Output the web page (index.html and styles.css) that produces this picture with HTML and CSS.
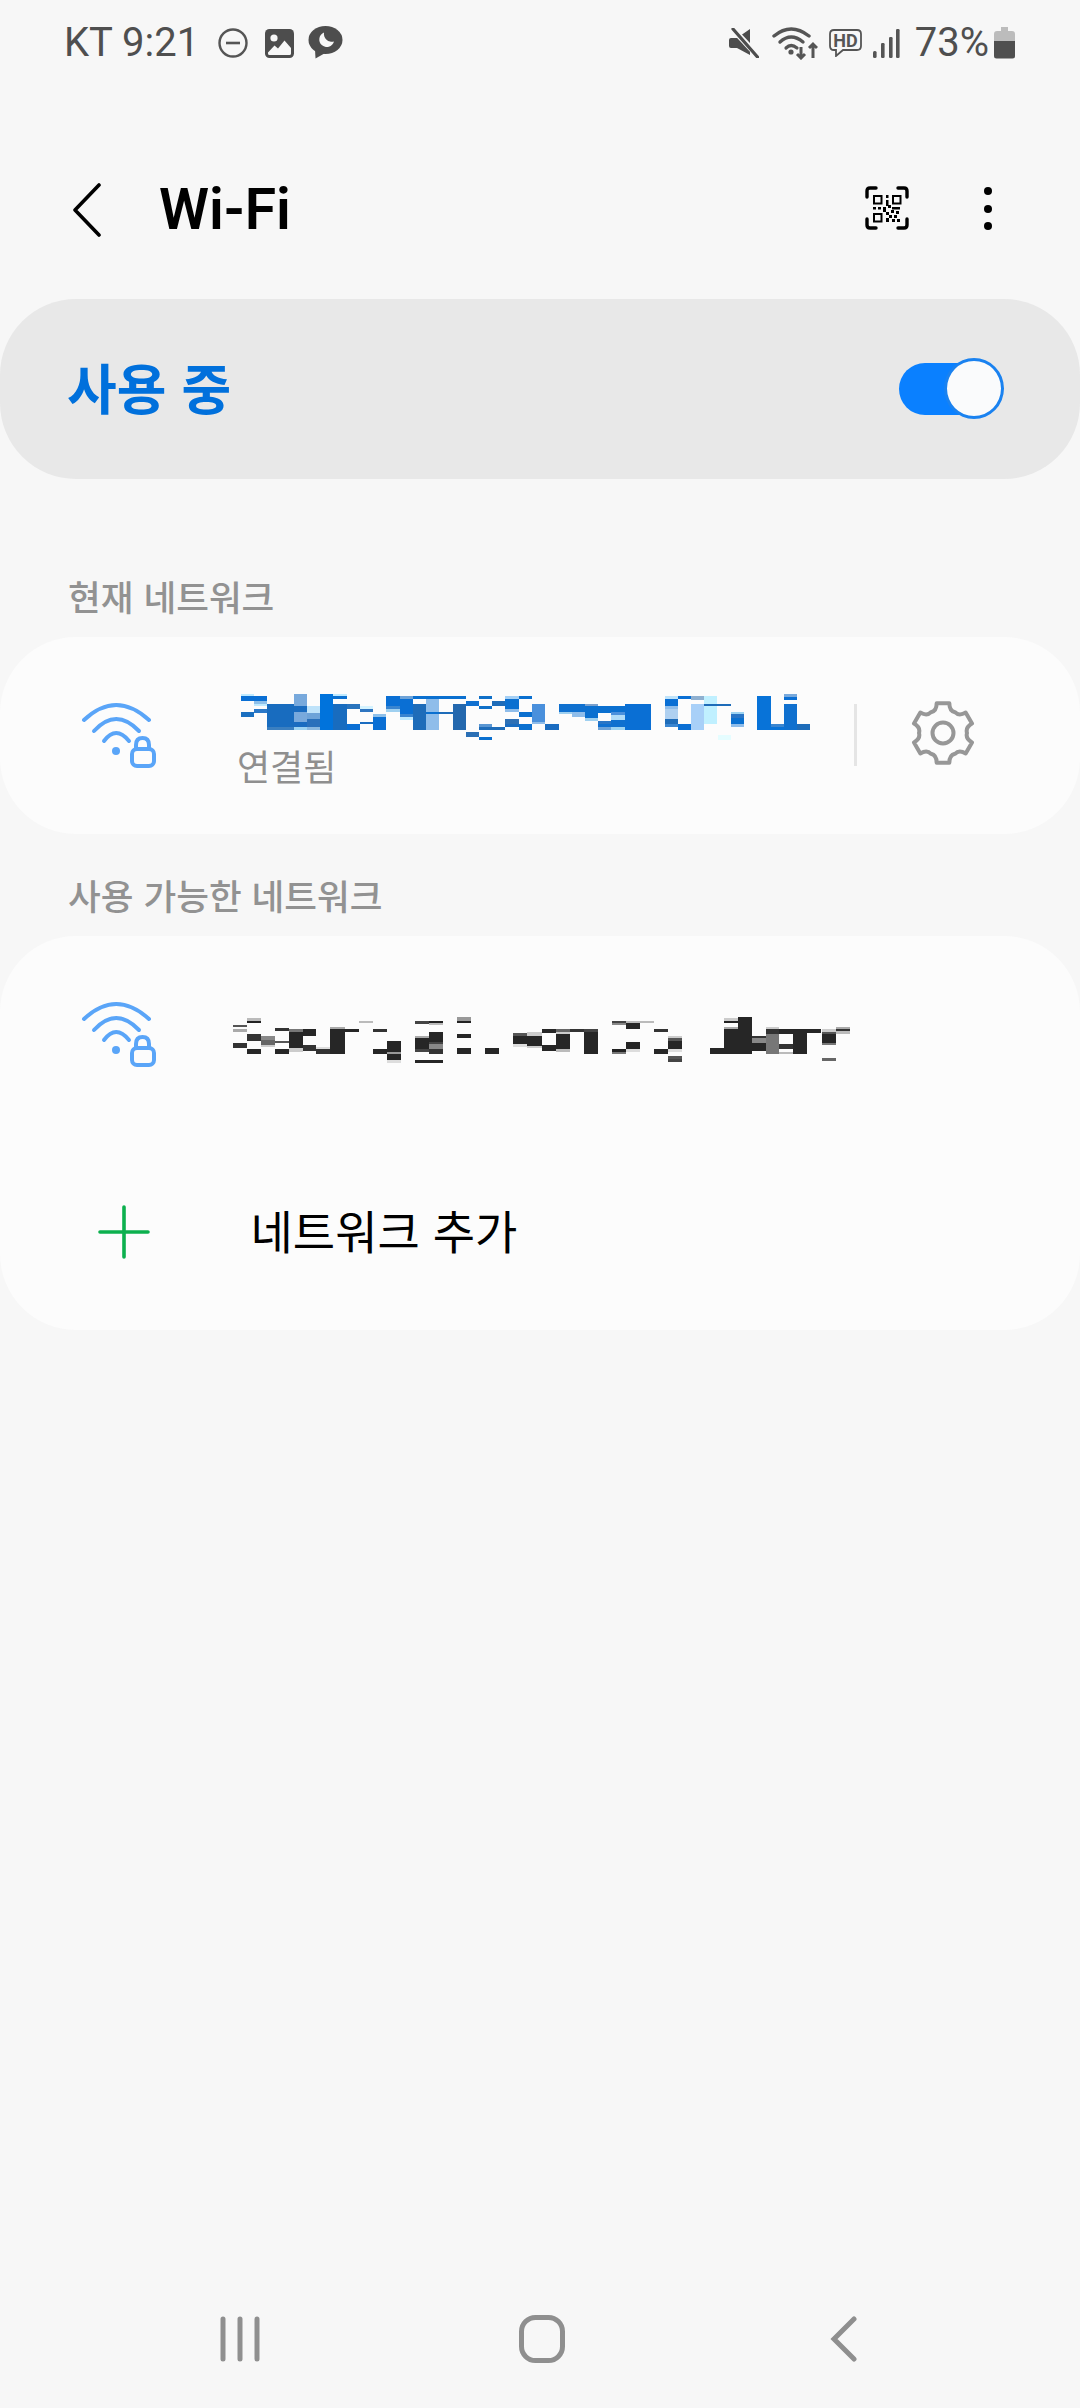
FILE: index.html
```html
<!DOCTYPE html>
<html lang="ko">
<head>
<meta charset="utf-8">
<title>Wi-Fi</title>
<link rel="stylesheet" href="styles.css">
</head>
<body>
<div class="page">
  <div class="status">
    <div class="status-left">
      <span class="status-text">KT 9:21</span>
      <svg class="ic-dnd" width="30" height="30" viewBox="0 0 30 30"><circle cx="15" cy="15" r="13.5" fill="none" stroke="#555" stroke-width="2.4"/><path d="M8 15H22" stroke="#555" stroke-width="2.6"/></svg>
      <svg class="ic-img" width="29" height="29" viewBox="0 0 29 29"><rect width="29" height="29" rx="4.5" fill="#4d4d4d"/><circle cx="9" cy="9" r="3.6" fill="#f7f7f7"/><path d="M3 23.5 9.5 16.5 13 19.5 19.5 11.5 26 19V24.5Q26 26 24.5 26H4.500Q3 26 3 24.500Z" fill="#f7f7f7"/></svg>
      <svg class="ic-chat" width="35" height="33" viewBox="0 0 35 33"><ellipse cx="17.500" cy="14" rx="17" ry="14" fill="#4d4d4d"/><path d="M7 23 7.500 32.500 19 26Z" fill="#4d4d4d"/><path d="M16 6.500A7.500 7.500 0 1 0 26 15.500 8 8 0 0 1 16 6.500Z" fill="#f7f7f7"/></svg>
    </div>
    <div class="status-right">
      <svg class="ic-mute" width="30" height="30" viewBox="0 0 30 30"><path d="M0 12Q0 10 2 10H8L21 1V27L8 20H2Q0 20 0 18Z" fill="#4d4d4d"/><path d="M2 -1 29 28" stroke="#f7f7f7" stroke-width="6"/><path d="M4 1 28.500 29" stroke="#4d4d4d" stroke-width="3.200" stroke-linecap="round"/></svg>
      <svg class="ic-wifi" width="46" height="34" viewBox="0 0 46 34"><g fill="none" stroke="#555" stroke-linecap="round"><path d="M2 10Q19-4 37 10" stroke-width="3.400"/><path d="M8 16Q19 6 31 16" stroke-width="3.400"/><path d="M14 22Q19 17 25 22" stroke-width="3.200"/></g><circle cx="19" cy="26" r="2.600" fill="#555"/><path d="M29 21V32M25 28 29 32 33 28M41 32V18M37 22 41 18 45 22" fill="none" stroke="#555" stroke-width="3"/></svg>
      <svg class="ic-hd" width="33" height="28" viewBox="0 0 33 28"><path d="M5 1H28Q32 1 32 5V17Q32 21 28 21H14L7 27V21H5Q1 21 1 17V5Q1 1 5 1Z" fill="none" stroke="#555" stroke-width="1.800"/><text class="hd-text" x="16.500" y="17.500" text-anchor="middle">HD</text></svg>
      <svg class="ic-sig" width="28" height="30" viewBox="0 0 28 30"><g fill="#555"><rect x="1" y="23" width="3.600" height="7" rx="1.500"/><rect x="9" y="15" width="3.600" height="15" rx="1.200"/><rect x="17" y="9" width="3.600" height="21" rx="1.200"/><rect x="24" y="1" width="3.600" height="29" rx="1.200"/></g></svg>
      <span class="status-text pct">73%</span>
      <svg class="ic-bat" width="21" height="32" viewBox="0 0 21 32"><path d="M7 0H14V4H18Q21 4 21 7V14H0V7Q0 4 3 4H7Z" fill="#bcbcbc"/><path d="M0 14H21V29Q21 31.500 18.500 31.500H2.500Q0 31.500 0 29Z" fill="#4f4f4f"/></svg>
    </div>
  </div>

  <header class="header">
    <svg class="back" width="30" height="54" viewBox="0 0 30 54"><path d="M26 2 2 27 26 52" fill="none" stroke="#000" stroke-width="3.600" stroke-linecap="round" stroke-linejoin="round"/></svg>
    <h1 class="title">Wi-Fi</h1>
    <svg class="qr" width="44" height="44" viewBox="0 0 44 44">
      <path d="M2 11V5Q2 2 5 2H11M33 2H39Q42 2 42 5V11M2 33V39Q2 42 5 42H11M33 42H39Q42 42 42 39V33" fill="none" stroke="#000" stroke-width="3.400" stroke-linecap="round"/>
      <g fill="none" stroke="#000" stroke-width="2"><rect x="9" y="10" width="7.500" height="7.500"/><rect x="28" y="10" width="7.500" height="7.500"/><rect x="9" y="28" width="7.500" height="7.500"/></g>
      <g fill="#000"><rect x="21" y="9" width="2.500" height="3"/><rect x="21" y="14" width="2.500" height="6"/><rect x="8" y="21" width="3" height="2.500"/><rect x="13" y="21" width="3" height="2.500"/><rect x="18" y="21" width="3" height="5"/><rect x="23" y="19" width="3" height="3"/><rect x="27" y="21" width="8" height="2.500"/><rect x="21" y="26" width="3" height="3"/><rect x="26" y="24" width="3" height="3"/><rect x="31" y="25" width="3" height="3"/><rect x="24" y="29" width="3" height="3"/><rect x="29" y="29" width="3" height="3"/><rect x="21" y="32" width="3" height="4"/><rect x="27" y="33" width="3" height="3"/><rect x="32" y="33" width="3" height="3"/></g>
    </svg>
    <div class="dots"><i></i><i></i><i></i></div>
  </header>

  <section class="master">
    <span class="master-label">사용 중</span>
    <span class="toggle"><span class="knob"></span></span>
  </section>

  <div class="section-label first">현재 네트워크</div>
  <section class="card">
    <div class="row">
      <svg class="wifi-lock" width="76" height="66" viewBox="81 702 76 66"><g fill="none" stroke="#5aa5f8" stroke-width="4" stroke-linecap="round"><path d="M84 720Q116 690 149 720"/><path d="M94 731Q116 707 139 731"/><path d="M104 741Q116 725 129 741"/><rect x="132" y="749" width="22" height="17" rx="5"/><path d="M136 749V745Q136 738 142.500 738 149 738 149 745V749"/></g><circle cx="116" cy="751" r="4" fill="#5aa5f8"/></svg>
      <div class="row-text">
        <svg class="mosaic" width="620" height="50" viewBox="0 60 1568 150" preserveAspectRatio="none" shape-rendering="crispEdges">
          <rect x="52" y="75" width="67" height="15" fill="#0a6fd4"/><rect x="52" y="70" width="33" height="5" fill="#bfeaff"/><rect x="85" y="90" width="33" height="8" fill="#8ec0ea"/><rect x="85" y="98" width="33" height="8" fill="#bfeaff"/><rect x="85" y="115" width="33" height="12" fill="#2a78c8"/><rect x="52" y="122" width="33" height="15" fill="#1a6fc0"/>
          <rect x="119" y="98" width="68" height="72" fill="#186cbf"/><rect x="119" y="168" width="68" height="9" fill="#3a7fc0"/>
          <rect x="187" y="69" width="33" height="35" fill="#78a9dc"/><rect x="187" y="104" width="33" height="18" fill="#1a6cc0"/><rect x="187" y="122" width="33" height="30" fill="#78a9dc"/><rect x="187" y="152" width="33" height="16" fill="#1a6cc0"/><rect x="187" y="168" width="33" height="9" fill="#9dd3f2"/>
          <rect x="220" y="104" width="33" height="21" fill="#bfe3fa"/><rect x="220" y="125" width="33" height="18" fill="#6ea3d8"/><rect x="220" y="143" width="33" height="25" fill="#2a70bb"/><rect x="220" y="168" width="33" height="9" fill="#8ab8e0"/>
          <rect x="253" y="69" width="33" height="108" fill="#0073dc"/>
          <rect x="286" y="98" width="34" height="79" fill="#186cbf"/><rect x="286" y="75" width="35" height="9" fill="#0b70d0"/><rect x="286" y="69" width="35" height="6" fill="#bfeaff"/>
          <rect x="320" y="98" width="35" height="15" fill="#2a74bd"/><rect x="320" y="160" width="35" height="17" fill="#0a6fd4"/><rect x="355" y="115" width="33" height="9" fill="#2f75c0"/><rect x="355" y="152" width="33" height="8" fill="#1a6cc0"/><rect x="355" y="105" width="33" height="10" fill="#d5f3ff"/><rect x="388" y="138" width="32" height="39" fill="#0a6fd4"/><rect x="388" y="128" width="32" height="10" fill="#8ec0ea"/>
          <rect x="420" y="75" width="35" height="30" fill="#0a6fd4"/><rect x="420" y="105" width="35" height="10" fill="#3a85d0"/><rect x="420" y="115" width="35" height="8" fill="#9fd0f0"/>
          <rect x="455" y="75" width="33" height="12" fill="#6ea3d8"/><rect x="455" y="85" width="33" height="45" fill="#0a6fd4"/><rect x="455" y="130" width="33" height="8" fill="#3a85d0"/><rect x="455" y="138" width="33" height="8" fill="#bfeaff"/>
          <rect x="488" y="75" width="135" height="9" fill="#0b70d0"/><rect x="488" y="98" width="33" height="79" fill="#1e6cb9"/><rect x="521" y="84" width="33" height="40" fill="#8fbdea"/><rect x="521" y="124" width="33" height="6" fill="#0b70d0"/><rect x="521" y="130" width="33" height="47" fill="#8fbdea"/><rect x="555" y="124" width="34" height="6" fill="#1e6cb9"/><rect x="589" y="98" width="33" height="79" fill="#2468ae"/>
          <rect x="622" y="90" width="33" height="15" fill="#1070d0"/><rect x="655" y="75" width="33" height="9" fill="#1070c8"/><rect x="655" y="105" width="33" height="9" fill="#1070c8"/><rect x="688" y="90" width="34" height="15" fill="#1e6cb9"/><rect x="722" y="84" width="33" height="30" fill="#0b70d0"/><rect x="722" y="75" width="33" height="10" fill="#a5d0f5"/><rect x="722" y="114" width="33" height="8" fill="#8fbdea"/><rect x="755" y="75" width="33" height="9" fill="#0b70d0"/><rect x="755" y="122" width="33" height="15" fill="#0b70d0"/><rect x="722" y="145" width="33" height="15" fill="#2e70b5"/><rect x="655" y="168" width="67" height="9" fill="#1e6cb9"/><rect x="655" y="160" width="33" height="8" fill="#5a96d2"/><rect x="722" y="160" width="33" height="9" fill="#1a6cc0"/><rect x="755" y="160" width="33" height="17" fill="#0b70d0"/><rect x="622" y="182" width="33" height="15" fill="#2a6fb5"/><rect x="655" y="198" width="33" height="9" fill="#0b70d0"/>
          <rect x="788" y="98" width="33" height="55" fill="#4a90dc"/><rect x="788" y="153" width="33" height="7" fill="#8fbdea"/><rect x="822" y="160" width="35" height="17" fill="#1a6cc0"/>
          <rect x="857" y="98" width="66" height="25" fill="#0f70cf"/><rect x="923" y="98" width="33" height="8" fill="#7aa0cc"/><rect x="857" y="123" width="33" height="6" fill="#9fd0f0"/><rect x="890" y="123" width="33" height="15" fill="#8fbdea"/><rect x="923" y="106" width="33" height="35" fill="#0b70d0"/><rect x="923" y="141" width="33" height="10" fill="#9fd0f0"/>
          <rect x="956" y="105" width="33" height="20" fill="#0b70d0"/><rect x="956" y="150" width="33" height="10" fill="#2a75c5"/><rect x="956" y="160" width="33" height="8" fill="#1070d0"/><rect x="956" y="168" width="33" height="9" fill="#6ea3d8"/><rect x="989" y="105" width="35" height="18" fill="#0b70d0"/><rect x="989" y="123" width="35" height="8" fill="#4a90dc"/><rect x="989" y="131" width="35" height="15" fill="#b0dcf8"/><rect x="989" y="146" width="35" height="22" fill="#0f70cf"/><rect x="989" y="168" width="35" height="9" fill="#9dd3f2"/><rect x="1024" y="98" width="66" height="79" fill="#0a6fd4"/>
          <rect x="1125" y="75" width="33" height="8" fill="#bfe3fa"/><rect x="1125" y="83" width="33" height="22" fill="#0a6fd4"/><rect x="1125" y="105" width="33" height="8" fill="#8fbdea"/><rect x="1125" y="113" width="33" height="30" fill="#afd0f0"/><rect x="1125" y="143" width="33" height="17" fill="#1e6cb9"/><rect x="1125" y="160" width="33" height="8" fill="#3a85d0"/><rect x="1158" y="75" width="33" height="8" fill="#0a6fd4"/><rect x="1158" y="160" width="33" height="17" fill="#0a6fd4"/><rect x="1191" y="75" width="33" height="12" fill="#8fb0d0"/><rect x="1191" y="98" width="33" height="79" fill="#a8d0f8"/><rect x="1224" y="75" width="33" height="23" fill="#c0f0ff"/><rect x="1224" y="98" width="68" height="6" fill="#1e6cb9"/><rect x="1224" y="104" width="33" height="55" fill="#c0f0ff"/><rect x="1292" y="122" width="33" height="8" fill="#9dd3f2"/><rect x="1292" y="130" width="33" height="10" fill="#2a75c5"/><rect x="1292" y="140" width="33" height="20" fill="#0a70d0"/><rect x="1292" y="160" width="33" height="8" fill="#8fbdea"/><rect x="1259" y="192" width="33" height="14" fill="#e5fdff"/>
          <rect x="1358" y="75" width="35" height="102" fill="#0873d8"/><rect x="1393" y="158" width="33" height="10" fill="#3a85d0"/><rect x="1393" y="168" width="33" height="9" fill="#0873d8"/><rect x="1426" y="70" width="33" height="8" fill="#78a9dc"/><rect x="1426" y="78" width="33" height="8" fill="#0a6fd4"/><rect x="1426" y="98" width="33" height="79" fill="#0f70cf"/><rect x="1459" y="158" width="33" height="19" fill="#1e6cb9"/>
        </svg>
        <span class="sub">연결됨</span>
      </div>
      <span class="divider"></span>
      <svg class="gear" width="64" height="66" viewBox="0 0 64 66"><path d="M25.660 3.170H38.340Q38.340 10.900 44 12.220 47.980 16.460 54.670 12.590L61 23.570Q54.320 27.440 56 33 54.320 38.560 61 42.430L54.670 53.410Q47.980 49.540 44 53.780 38.340 55.100 38.340 62.830H25.660Q25.660 55.100 20 53.780 16.020 49.540 9.330 53.410L3 42.430Q9.680 38.560 8 33 9.680 27.440 3 23.570L9.330 12.590Q16.020 16.460 20 12.220 25.660 10.900 25.660 3.170Z" fill="none" stroke="#979797" stroke-width="4" stroke-linejoin="round"/><circle cx="32" cy="33" r="10.500" fill="none" stroke="#979797" stroke-width="4"/></svg>
    </div>
  </section>

  <div class="section-label second">사용 가능한 네트워크</div>
  <section class="card">
    <div class="row">
      <svg class="wifi-lock" width="76" height="66" viewBox="81 702 76 66"><g fill="none" stroke="#5aa5f8" stroke-width="4" stroke-linecap="round"><path d="M84 720Q116 690 149 720"/><path d="M94 731Q116 707 139 731"/><path d="M104 741Q116 725 129 741"/><rect x="132" y="749" width="22" height="17" rx="5"/><path d="M136 749V745Q136 738 142.500 738 149 738 149 745V749"/></g><circle cx="116" cy="751" r="4" fill="#5aa5f8"/></svg>
      <div class="row-text">
        <svg class="mosaic" width="660" height="50" viewBox="0 40 1568 150" preserveAspectRatio="none" shape-rendering="crispEdges">
          <rect x="31" y="72" width="33" height="8" fill="#555"/><rect x="31" y="85" width="33" height="8" fill="#aaa"/><rect x="64" y="52" width="33" height="8" fill="#bbb"/><rect x="64" y="60" width="33" height="6" fill="#222"/><rect x="64" y="100" width="33" height="20" fill="#333"/><rect x="31" y="128" width="33" height="15" fill="#333"/><rect x="64" y="145" width="33" height="14" fill="#262626"/><rect x="97" y="105" width="33" height="12" fill="#888"/><rect x="97" y="117" width="33" height="15" fill="#666"/><rect x="97" y="132" width="33" height="6" fill="#ccc"/><rect x="130" y="82" width="33" height="10" fill="#333"/><rect x="130" y="120" width="33" height="6" fill="#555"/><rect x="130" y="145" width="33" height="14" fill="#262626"/><rect x="163" y="85" width="33" height="8" fill="#777"/><rect x="163" y="93" width="33" height="50" fill="#262626"/><rect x="163" y="143" width="33" height="10" fill="#ccc"/><rect x="196" y="85" width="33" height="20" fill="#262626"/><rect x="196" y="132" width="33" height="20" fill="#333"/><rect x="229" y="140" width="33" height="6" fill="#ddd"/><rect x="229" y="146" width="33" height="13" fill="#333"/><rect x="262" y="85" width="35" height="74" fill="#262626"/><rect x="262" y="78" width="35" height="7" fill="#aaa"/><rect x="297" y="85" width="33" height="10" fill="#262626"/><rect x="330" y="60" width="33" height="6" fill="#bbb"/><rect x="363" y="85" width="33" height="8" fill="#333"/><rect x="363" y="145" width="33" height="14" fill="#262626"/><rect x="397" y="120" width="33" height="35" fill="#262626"/><rect x="397" y="155" width="33" height="5" fill="#999"/><rect x="397" y="160" width="33" height="18" fill="#262626"/><rect x="397" y="178" width="33" height="8" fill="#ddd"/>
          <rect x="463" y="60" width="33" height="10" fill="#444"/><rect x="496" y="60" width="33" height="6" fill="#222"/><rect x="496" y="66" width="33" height="6" fill="#bbb"/><rect x="463" y="105" width="33" height="6" fill="#aaa"/><rect x="463" y="111" width="33" height="33" fill="#262626"/><rect x="463" y="144" width="33" height="10" fill="#444"/><rect x="496" y="93" width="33" height="30" fill="#262626"/><rect x="496" y="123" width="33" height="6" fill="#444"/><rect x="496" y="129" width="33" height="15" fill="#888"/><rect x="496" y="144" width="33" height="15" fill="#333"/><rect x="463" y="177" width="67" height="9" fill="#262626"/><rect x="563" y="50" width="33" height="10" fill="#999"/><rect x="563" y="60" width="33" height="6" fill="#222"/><rect x="563" y="99" width="33" height="12" fill="#262626"/><rect x="563" y="143" width="33" height="16" fill="#262626"/><rect x="630" y="143" width="33" height="16" fill="#262626"/>
          <rect x="696" y="97" width="33" height="8" fill="#555"/><rect x="696" y="105" width="33" height="25" fill="#262626"/><rect x="696" y="130" width="33" height="8" fill="#ddd"/><rect x="729" y="95" width="35" height="10" fill="#ccc"/><rect x="729" y="105" width="35" height="30" fill="#262626"/><rect x="729" y="135" width="35" height="8" fill="#ccc"/><rect x="764" y="85" width="35" height="12" fill="#262626"/><rect x="764" y="132" width="35" height="20" fill="#262626"/><rect x="798" y="85" width="33" height="8" fill="#666"/><rect x="798" y="93" width="33" height="8" fill="#ccc"/><rect x="798" y="100" width="33" height="45" fill="#262626"/><rect x="798" y="145" width="33" height="8" fill="#bbb"/><rect x="831" y="85" width="33" height="10" fill="#333"/><rect x="864" y="93" width="33" height="66" fill="#262626"/><rect x="864" y="85" width="33" height="8" fill="#444"/>
          <rect x="931" y="60" width="33" height="8" fill="#444"/><rect x="931" y="68" width="33" height="6" fill="#888"/><rect x="931" y="145" width="33" height="8" fill="#222"/><rect x="931" y="153" width="33" height="6" fill="#777"/><rect x="964" y="60" width="66" height="6" fill="#bbb"/><rect x="964" y="66" width="33" height="18" fill="#262626"/><rect x="964" y="125" width="33" height="20" fill="#262626"/><rect x="964" y="145" width="33" height="8" fill="#ddd"/><rect x="1031" y="85" width="33" height="8" fill="#333"/><rect x="1031" y="145" width="33" height="14" fill="#262626"/><rect x="1064" y="105" width="33" height="8" fill="#ccc"/><rect x="1064" y="112" width="33" height="10" fill="#555"/><rect x="1064" y="122" width="33" height="24" fill="#262626"/><rect x="1064" y="146" width="33" height="8" fill="#ddd"/><rect x="1064" y="165" width="33" height="10" fill="#555"/><rect x="1064" y="175" width="33" height="10" fill="#444"/>
          <rect x="1197" y="52" width="33" height="8" fill="#ccc"/><rect x="1197" y="60" width="33" height="6" fill="#222"/><rect x="1197" y="78" width="33" height="8" fill="#aaa"/><rect x="1197" y="85" width="33" height="60" fill="#262626"/><rect x="1230" y="50" width="33" height="95" fill="#262626"/><rect x="1164" y="143" width="100" height="16" fill="#262626"/><rect x="1263" y="105" width="33" height="7" fill="#333"/><rect x="1263" y="112" width="33" height="15" fill="#888"/><rect x="1263" y="127" width="33" height="25" fill="#262626"/><rect x="1296" y="78" width="33" height="8" fill="#ccc"/><rect x="1296" y="85" width="33" height="15" fill="#333"/><rect x="1296" y="100" width="33" height="59" fill="#777"/><rect x="1329" y="85" width="33" height="15" fill="#262626"/><rect x="1329" y="130" width="33" height="15" fill="#333"/><rect x="1329" y="153" width="33" height="6" fill="#bbb"/><rect x="1362" y="85" width="33" height="74" fill="#262626"/><rect x="1395" y="85" width="33" height="12" fill="#262626"/><rect x="1430" y="85" width="33" height="8" fill="#ccc"/><rect x="1430" y="93" width="33" height="6" fill="#555"/><rect x="1430" y="99" width="33" height="28" fill="#262626"/><rect x="1430" y="127" width="33" height="6" fill="#777"/><rect x="1430" y="172" width="33" height="9" fill="#666"/><rect x="1463" y="78" width="33" height="8" fill="#aaa"/><rect x="1463" y="86" width="33" height="6" fill="#333"/><rect x="1463" y="92" width="33" height="8" fill="#bbb"/>
        </svg>
      </div>
    </div>
    <div class="row add-row">
      <svg class="plus" width="52" height="54" viewBox="0 0 52 54"><path d="M26 2V52M2 27H50" stroke="#0cb04e" stroke-width="3.600" stroke-linecap="round"/></svg>
      <span class="add-label">네트워크 추가</span>
    </div>
  </section>

  <nav class="nav">
    <svg width="40" height="46" viewBox="0 0 40 46"><path d="M3 3V43M20 3V43M37 3V43" stroke="#8f8f8f" stroke-width="5" stroke-linecap="round"/></svg>
    <svg width="46" height="48" viewBox="0 0 46 48"><rect x="2.500" y="2.500" width="41" height="43" rx="14" fill="none" stroke="#8f8f8f" stroke-width="5"/></svg>
    <svg width="28" height="46" viewBox="0 0 28 46"><path d="M24 3 4 23 24 43" fill="none" stroke="#8f8f8f" stroke-width="5" stroke-linecap="round" stroke-linejoin="miter"/></svg>
  </nav>
</div>
</body>
</html>
```

FILE: styles.css
```css
* { box-sizing: border-box; }
html, body { margin: 0; padding: 0; }
body {
  background: #f7f7f7;
  font-family: Roboto, "Noto Sans CJK KR", sans-serif;
}
.page {
  width: 1080px;
  height: 2408px;
  display: flex;
  flex-direction: column;
  overflow: hidden;
}
svg { display: block; flex: none; }

.status {
  height: 86px;
  flex: none;
  display: flex;
  align-items: center;
  justify-content: space-between;
  padding: 0 65px 0 64px;
}
.status-left, .status-right { display: flex; align-items: center; }
.status-text { font-size: 40px; color: #4f4f4f; line-height: 1; }
.ic-dnd { margin-left: 19px; }
.ic-img { margin-left: 17px; }
.ic-chat { margin-left: 14px; margin-top: -1px; }
.ic-mute { margin-top: 0; }
.ic-wifi { margin-left: 13px; }
.ic-hd { margin-left: 11px; }
.hd-text { font-family: Roboto, sans-serif; font-size: 18px; font-weight: 700; fill: #555; }
.ic-sig { margin-left: 10px; }
.pct { margin-left: 15px; }
.ic-bat { margin-left: 5px; }

.header {
  height: 213px;
  flex: none;
  display: flex;
  align-items: center;
  padding: 34px 0 0 73px;
}
.title {
  margin: 0 0 0 56px;
  font-size: 57px;
  font-weight: 600;
  color: #000;
  line-height: 1;
}
.qr { margin-left: auto; margin-top: -4px; }
.dots {
  margin: -2px 88px 0 75px;
  display: flex;
  flex-direction: column;
  gap: 9.5px;
}
.dots i { display: block; width: 8px; height: 8px; border-radius: 50%; background: #000; }

.master {
  height: 180px;
  flex: none;
  background: #e8e8e8;
  border-radius: 76px;
  display: flex;
  align-items: center;
  justify-content: space-between;
  padding: 0 81px 0 67px;
}
.master-label {
  margin-top: -6px;
  font-family: "Noto Sans CJK KR", sans-serif;
  font-size: 54px;
  font-weight: 700;
  color: #0070dc;
}
.toggle {
  position: relative;
  display: block;
  width: 100px;
  height: 52px;
  border-radius: 26px;
  background: #0a80ff;
}
.knob {
  position: absolute;
  right: -5px;
  top: -5px;
  width: 60px;
  height: 61px;
  border-radius: 50%;
  background: #fafbfc;
  border: 3px solid #1a82f0;
}

.section-label {
  height: 50px;
  line-height: 50px;
  flex: none;
  padding-left: 68px;
  font-family: "Noto Sans CJK KR", sans-serif;
  font-size: 35.6px;
  font-weight: 500;
  color: #929292;
}
.section-label.first { margin-top: 92px; margin-bottom: 16px; }
.section-label.second { margin-top: 36px; margin-bottom: 16px; }

.card {
  flex: none;
  background: #fcfcfc;
  border-radius: 76px;
}
.row {
  height: 197px;
  display: flex;
  align-items: center;
  padding-left: 81px;
}
.wifi-lock { margin-top: -2px; }
.row-text { margin-left: 63px; display: flex; flex-direction: column; }
.mosaic { margin-top: 8px; }
.sub {
  margin: 4px 0 4px 17px;
  font-family: "Noto Sans CJK KR", sans-serif;
  font-size: 36px;
  line-height: 40px;
  color: #8f8f8f;
}
.divider { width: 3px; height: 62px; background: #e5e5e5; margin-left: 13.5px; margin-top: -2px; }
.gear { margin-left: 54.5px; margin-top: -5px; }
.add-row { padding-left: 98px; }
.add-label {
  margin: -5px 0 0 100.5px;
  font-family: "Noto Sans CJK KR", sans-serif;
  font-size: 46px;
  color: #000;
}

.nav {
  margin-top: auto;
  height: 138px;
  flex: none;
  padding-left: 3px;
  display: grid;
  grid-template-columns: repeat(3, 302px);
  justify-content: center;
  justify-items: center;
  align-items: center;
}
```
